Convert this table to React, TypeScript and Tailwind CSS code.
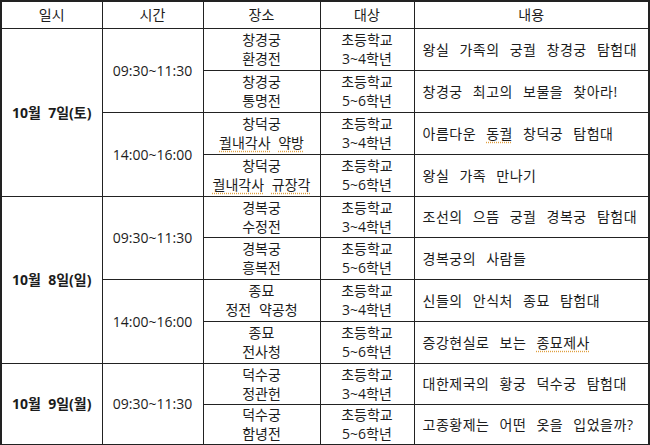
import React from "react";

interface Session {
  place: [string, string];
  target: string;
  content: string;
}

interface Slot {
  time: string;
  sessions: Session[];
}

interface Day {
  date: string;
  slots: Slot[];
}

const sq = "underline decoration-dotted decoration-[#e0a040] underline-offset-[3px]";

const days: Day[] = [
  {
    date: "10월  7일(토)",
    slots: [
      {
        time: "09:30~11:30",
        sessions: [
          { place: ["창경궁", "환경전"], target: "3~4학년", content: "왕실 가족의 궁궐 창경궁 탐험대" },
          { place: ["창경궁", "통명전"], target: "5~6학년", content: "창경궁 최고의 보물을 찾아라!" },
        ],
      },
      {
        time: "14:00~16:00",
        sessions: [
          { place: ["창덕궁", "궐내각사|약방"], target: "3~4학년", content: "아름다운 동궐 창덕궁 탐험대" },
          { place: ["창덕궁", "궐내각사|규장각"], target: "5~6학년", content: "왕실 가족 만나기" },
        ],
      },
    ],
  },
  {
    date: "10월  8일(일)",
    slots: [
      {
        time: "09:30~11:30",
        sessions: [
          { place: ["경복궁", "수정전"], target: "3~4학년", content: "조선의 으뜸 궁궐 경복궁 탐험대" },
          { place: ["경복궁", "흥복전"], target: "5~6학년", content: "경복궁의 사람들" },
        ],
      },
      {
        time: "14:00~16:00",
        sessions: [
          { place: ["종묘", "정전 약공청"], target: "3~4학년", content: "신들의 안식처 종묘 탐험대" },
          { place: ["종묘", "전사청"], target: "5~6학년", content: "증강현실로 보는 종묘제사" },
        ],
      },
    ],
  },
  {
    date: "10월  9일(월)",
    slots: [
      {
        time: "09:30~11:30",
        sessions: [
          { place: ["덕수궁", "정관헌"], target: "3~4학년", content: "대한제국의 황궁 덕수궁 탐험대" },
          { place: ["덕수궁", "함녕전"], target: "5~6학년", content: "고종황제는 어떤 옷을 입었을까?" },
        ],
      },
    ],
  },
];

// spell-check squiggle on a few words, like the source document
const squiggly = ["궐내각사", "약방", "규장각", "동궐", "종묘제사"];

function Marked({ text }: { text: string }) {
  const words = text.replace("|", " ").split(" ");
  return (
    <>
      {words.map((w, i) => (
        <React.Fragment key={i}>
          {i > 0 && " "}
          {squiggly.includes(w) ? <span className={sq}>{w}</span> : w}
        </React.Fragment>
      ))}
    </>
  );
}

const cell = "border border-[#222] text-center align-middle";
const rowHeights = ["h-[42px]", "h-[42px]", "h-[42px]", "h-[42px]", "h-[41px]", "h-[42px]", "h-[42px]", "h-[42px]", "h-[41px]", "h-[41px]"];

export default function App() {
  let rowIndex = 0;
  const rows: React.ReactNode[] = [];

  days.forEach((day) => {
    const dayRows = day.slots.reduce((n, s) => n + s.sessions.length, 0);
    day.slots.forEach((slot, si) => {
      slot.sessions.forEach((session, ei) => {
        const h = rowHeights[rowIndex];
        rows.push(
          <tr key={rowIndex} className={h}>
            {si === 0 && ei === 0 && (
              <td rowSpan={dayRows} className={`${cell} font-bold whitespace-pre`}>
                {day.date}
              </td>
            )}
            {ei === 0 && (
              <td rowSpan={slot.sessions.length} className={cell}>
                {slot.time}
              </td>
            )}
            <td className={`${cell} leading-[19px]`}>
              <div>{session.place[0]}</div>
              <div className="[word-spacing:4px]">
                <Marked text={session.place[1]} />
              </div>
            </td>
            <td className={`${cell} leading-[19px]`}>
              <div>초등학교</div>
              <div>{session.target}</div>
            </td>
            <td className="border border-[#222] align-middle pl-[8px] text-left tracking-[0.5px] [word-spacing:6px]">
              <Marked text={session.content} />
            </td>
          </tr>
        );
        rowIndex++;
      });
    });
  });

  return (
    <div
      className="w-[650px] h-[445px] bg-white text-[#1c1c1c] text-[14px]"
      style={{ fontFamily: '"Open Sans", "Noto Sans CJK KR", sans-serif' }}
    >
      <table className="w-[650px] table-fixed border-collapse border-2 border-[#222]">
        <colgroup>
          <col className="w-[101px]" />
          <col className="w-[101px]" />
          <col className="w-[117px]" />
          <col className="w-[94px]" />
          <col />
        </colgroup>
        <thead>
          <tr className="h-[27px]">
            <th className={`${cell} font-normal`}>일시</th>
            <th className={`${cell} font-normal`}>시간</th>
            <th className={`${cell} font-normal`}>장소</th>
            <th className={`${cell} font-normal`}>대상</th>
            <th className={`${cell} font-normal`}>내용</th>
          </tr>
        </thead>
        <tbody>{rows}</tbody>
      </table>
    </div>
  );
}
